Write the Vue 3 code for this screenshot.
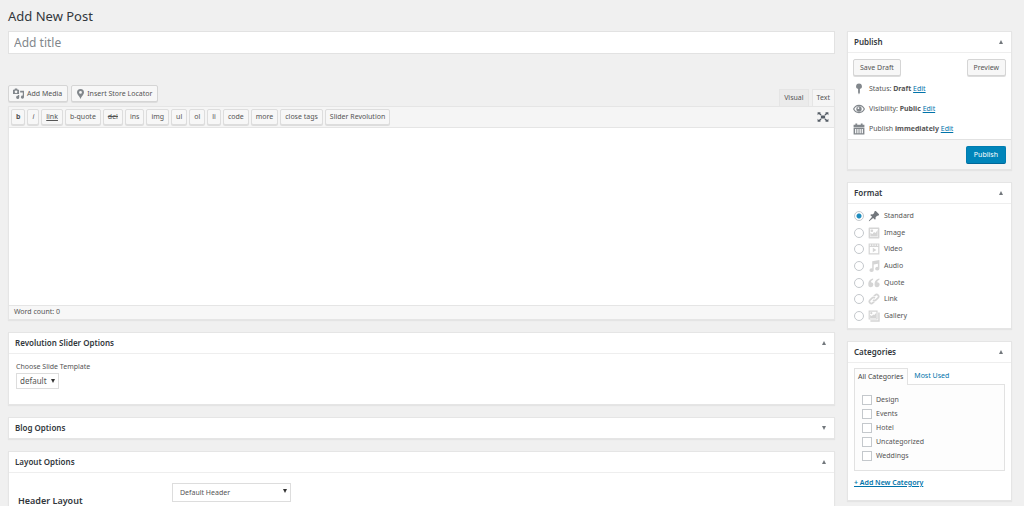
<script setup>
import { ref } from 'vue'

const title = ref('')
const content = ref('')
const format = ref('Standard')
const slide = ref('default')
const header = ref('Default Header')
const checked = ref([])

const tags = ['b', 'i', 'link', 'b-quote', 'del', 'ins', 'img', 'ul', 'ol', 'li', 'code', 'more', 'close tags', 'Slider Revolution']
const categories = ['Design', 'Events', 'Hotel', 'Uncategorized', 'Weddings']

const status = [
  { label: 'Status:', value: 'Draft', icon: 'M10 1a5 4.500 0 0 1 1.500 8.800V16L10 19 8.500 16V9.800A5 4.500 0 0 1 10 1z' },
  { label: 'Visibility:', value: 'Public', icon: 'M10 3C5 3 1.500 6.500 0 10c1.500 3.500 5 7 10 7s8.500-3.500 10-7C18.500 6.500 15 3 10 3zM10 5c3.800 0 6.300 2.200 7.800 5-1.500 2.800-4 5-7.800 5s-6.300-2.200-7.800-5C3.700 7.200 6.200 5 10 5zM10 5.500a4.500 4.500 0 1 0 0 9 4.500 4.500 0 0 0 0-9zM9 7a1.500 1.500 0 1 1 0 3 1.500 1.500 0 0 1 0-3z' },
  { label: 'Publish', value: 'immediately', icon: 'M1 3h3V1h3v2h6V1h3v2h3v4H1V3zM1 8h18v11H1V8zM3.500 10v7h2v-7h-2zM7.200 10v7h2v-7h-2zM10.900 10v7h2v-7h-2zM14.500 10v7h2v-7h-2z' },
]

const formats = [
  { name: 'Standard', icon: 'M10.400 3l1.100-1.100c.6-.6 1.400-.4 1.900.1l4.600 4.600c.5.500.7 1.300.1 1.900L17 9.600c-.7-.1-1.500-.1-2.100.2l-2.300 2.300c.4 1.500.2 3.100-.9 4.200L8.600 13.200 3.500 17.700c-.6.500-1.700 1.200-2 .9s.4-1.400.9-2L6.800 11.400 3.700 8.300c1.100-1.100 2.700-1.300 4.200-.9l2.300-2.300c.3-.6.3-1.400.2-2.100z' },
  { name: 'Image', icon: 'M2 1h16a1 1 0 0 1 1 1v16a1 1 0 0 1-1 1H2a1 1 0 0 1-1-1V2a1 1 0 0 1 1-1zM3.500 3.500v13h13v-13h-13zM6.500 4a2.200 2.200 0 1 1 0 4.400 2.200 2.200 0 0 1 0-4.400zM4 16V10l3.500 1.500L10 8.500l2.500 1.500L16 5v11H4z' },
  { name: 'Video', icon: 'M1 1h18v18H1V1zM3 2.500v2h2v-2H3zM7 2.500v2h2v-2H7zM11 2.500v2h2v-2h-2zM15 2.500v2h2v-2h-2zM3 6.500V17h14V6.500H3zM8 8l6 3.800-6 3.800V8z' },
  { name: 'Audio', icon: 'M7 2l12-2v14.500a3.500 3 0 1 1-2.500-2.900V6.200L9.500 7.500V17A3.500 3 0 1 1 7 14.100V2z' },
  { name: 'Quote', icon: 'M8.500 2.500v2.200C6.300 5.500 5 7 4.800 8.700a4.200 4.200 0 1 1-4.300 4C.2 7 3.500 3.300 8.500 2.500zM19 2.500v2.200c-2.200.8-3.500 2.300-3.700 4a4.200 4.200 0 1 1-4.300 4C10.700 7 14 3.300 19 2.500z' },
  { name: 'Link', icon: 'M17.700 2.300a4.800 4.800 0 0 0-6.600 0L8 5.300c1.300-.3 2.500 0 3.600.6l1.500-1.500a1.800 1.800 0 1 1 2.600 2.600l-3.400 3.400a1.800 1.800 0 0 1-2.700 0L7.500 12.500a4.800 4.800 0 0 0 6.800 0l3.400-3.500a4.800 4.800 0 0 0 0-6.700zM2.300 17.700a4.800 4.800 0 0 0 6.600 0l3.100-3c-1.300.3-2.500 0-3.600-.6l-1.500 1.500a1.800 1.800 0 1 1-2.600-2.600l3.400-3.400a1.800 1.800 0 0 1 2.700 0L12.500 7.500a4.800 4.800 0 0 0-6.800 0L2.300 11a4.800 4.800 0 0 0 0 6.700z' },
  { name: 'Gallery', icon: 'M1 1h15v15H1V1zM3 3v11h11V3H3zM5.500 3.500a1.800 1.800 0 1 1 0 3.600 1.800 1.800 0 0 1 0-3.600zM3.500 13.500V8.500l3 1.500 2-2.500 2 1L13.500 5v8.500h-10zM17 4h2.500v15.500H4V17h13V4z' },
]
</script>

<template>
  <div class="page">
    <h1>Add New Post</h1>
    <div class="columns">
      <main>
        <input v-model="title" class="title" type="text" placeholder="Add title" aria-label="Add title" />

        <div class="editor-tools">
          <button class="button media" type="button">
            <svg viewBox="0 0 20 20" aria-hidden="true"><path fill-rule="evenodd" d="M0 3h2.500l1-2h4l1 2H11v8H0V3zM5.500 4.500a2.500 2.500 0 1 0 0 5 2.500 2.500 0 0 0 0-5zM13 5h7v11.500a2.800 2.800 0 1 1-2.200-2.700V8H13V5zM9 12.500h2.300V17A2.800 2.800 0 1 1 9 14.300v-1.800z" /></svg>
            Add Media
          </button>
          <button class="button media" type="button">
            <svg class="pin" viewBox="0 0 14 20" aria-hidden="true"><path fill-rule="evenodd" d="M7 0a7 7 0 0 1 7 7C14 11.500 9 14 7 20 5 14 0 11.500 0 7A7 7 0 0 1 7 0zM7 4a2.800 2.800 0 1 0 0 5.600A2.800 2.800 0 0 0 7 4z" /></svg>
            Insert Store Locator
          </button>
          <div class="modes">
            <button type="button">Visual</button>
            <button class="active" type="button">Text</button>
          </div>
        </div>

        <section class="editor">
          <div class="toolbar">
            <button v-for="tag in tags" :key="tag" type="button" class="button tag" :class="'tag-' + tag.charAt(0) + tag.length">{{ tag }}</button>
            <button class="expand" type="button" aria-label="Fullscreen">
              <svg viewBox="0 0 20 20" aria-hidden="true"><path d="M6.500 7.500h7v5h-7zM1 2h5.500L5 3.500 7.500 6 6 7.500 3 5 1 7zM19 2h-5.500L15 3.500 12.500 6 14 7.500 17 5l2 2zM1 18h5.500L5 16.500 7.500 14 6 12.500 3 15l-2-2zM19 18h-5.500l1.500-1.500-2.500-2.500 1.500-1.500 3 2.500 2-2z" /></svg>
            </button>
          </div>
          <textarea v-model="content" aria-label="Content"></textarea>
          <div class="count">Word count: 0</div>
        </section>

        <section class="box">
          <h2>Revolution Slider Options<button type="button" class="toggle" aria-label="Toggle panel"></button></h2>
          <div class="slider-body">
            <label for="slide">Choose Slide Template</label>
            <span class="select">
              <select id="slide" v-model="slide"><option>default</option></select>
            </span>
          </div>
        </section>

        <section class="box closed">
          <h2>Blog Options<button type="button" class="toggle down" aria-label="Toggle panel"></button></h2>
        </section>

        <section class="box">
          <h2>Layout Options<button type="button" class="toggle" aria-label="Toggle panel"></button></h2>
          <div class="layout-body">
            <label for="header">Header Layout</label>
            <span class="select wide">
              <select id="header" v-model="header"><option>Default Header</option></select>
            </span>
          </div>
        </section>
      </main>

      <aside>
        <section class="box">
          <h2>Publish<button type="button" class="toggle" aria-label="Toggle panel"></button></h2>
          <div class="publish-body">
            <div class="drafts">
              <button class="button" type="button">Save Draft</button>
              <button class="button" type="button">Preview</button>
            </div>
            <p v-for="row in status" :key="row.label">
              <svg viewBox="0 0 20 20" aria-hidden="true"><path fill-rule="evenodd" :d="row.icon" /></svg>
              <span>{{ row.label }} <b>{{ row.value }}</b> <a href="#">Edit</a></span>
            </p>
          </div>
          <div class="publish-foot">
            <button class="primary" type="button">Publish</button>
          </div>
        </section>

        <section class="box">
          <h2>Format<button type="button" class="toggle" aria-label="Toggle panel"></button></h2>
          <div class="formats">
            <label v-for="f in formats" :key="f.name">
              <input v-model="format" type="radio" name="format" :value="f.name" />
              <svg viewBox="0 0 20 20" :class="{ dark: f.name === 'Standard' }" aria-hidden="true"><path fill-rule="evenodd" :d="f.icon" /></svg>
              {{ f.name }}
            </label>
          </div>
        </section>

        <section class="box">
          <h2>Categories<button type="button" class="toggle" aria-label="Toggle panel"></button></h2>
          <div class="cat-body">
            <div class="tabs">
              <button class="active" type="button">All Categories</button>
              <button type="button">Most Used</button>
            </div>
            <div class="cats">
              <label v-for="c in categories" :key="c">
                <input v-model="checked" type="checkbox" :value="c" />{{ c }}
              </label>
            </div>
            <a class="add" href="#">+ Add New Category</a>
          </div>
        </section>
      </aside>
    </div>
  </div>
</template>

<style>
html,
body {
  margin: 0;
  background: #f0f0f0;
}
</style>

<style scoped>
* {
  box-sizing: border-box;
}
.page {
  padding: 8px 12px 12px 8px;
  font: 7px/12px "Noto Sans", "Open Sans", sans-serif;
  color: #555;
}
button,
input,
select,
textarea {
  font: inherit;
  color: inherit;
  margin: 0;
}
button {
  padding: 0;
  border: 0;
  background: none;
  white-space: nowrap;
}
svg {
  fill: #82878c;
  flex: none;
}
a {
  color: #0073aa;
}
h1 {
  margin: 0 0 7px;
  font-size: 13px;
  line-height: 16px;
  font-weight: 400;
  color: #32373c;
}
.columns {
  display: flex;
  align-items: flex-start;
  gap: 12px;
}
main {
  flex: 1;
  min-width: 0;
}
aside {
  width: 165px;
  flex: none;
}
.title {
  display: block;
  width: 100%;
  height: 23px;
  padding: 0 5px;
  border: 1px solid #e2e2e2;
  background: #fff;
  font-size: 12px;
}
.title::placeholder {
  color: #82878c;
  opacity: 1;
}
.button {
  height: 17px;
  padding: 0 6px;
  border: 1px solid #d5d5d5;
  border-radius: 2px;
  background: #f7f7f7;
  box-shadow: 0 1px 0 #ddd;
}
.editor-tools {
  display: flex;
  align-items: flex-start;
  gap: 3px;
  margin-top: 31px;
}
.media {
  display: flex;
  align-items: center;
  gap: 3px;
  padding: 0 5px 0 4px;
}
.media svg {
  width: 11px;
  height: 11px;
}
.media .pin {
  width: 7px;
  height: 10px;
  margin-left: 1px;
}
.modes {
  display: flex;
  gap: 3px;
  margin: 4px 0 0 auto;
}
.modes button {
  height: 17px;
  padding: 0 4px;
  border: 1px solid #e5e5e5;
  border-bottom: 0;
  background: #ebebeb;
}
.modes .active {
  background: #f5f5f5;
}
.editor {
  border: 1px solid #e5e5e5;
  box-shadow: 0 1px 1px #e4e4e4;
}
.toolbar {
  display: flex;
  gap: 2px;
  padding: 2px 5px 2px 2px;
  background: #f5f5f5;
  border-bottom: 1px solid #e5e5e5;
}
.tag {
  height: 16px;
  padding: 0 4px;
  border-color: #ddd;
}
.tag-b1 {
  font-weight: 700;
}
.tag-i1 {
  font-style: italic;
}
.tag-l4 {
  text-decoration: underline;
}
.tag-d3 {
  text-decoration: line-through;
}
.expand {
  display: flex;
  align-items: center;
  margin-left: auto;
}
.expand svg {
  width: 12px;
  height: 12px;
  fill: #555d66;
}
textarea {
  display: block;
  width: 100%;
  height: 177px;
  border: 0;
  resize: none;
  background: #fff;
}
.count {
  height: 14px;
  padding: 0 5px;
  border-top: 1px solid #e5e5e5;
  background: #f7f7f7;
}
.box {
  border: 1px solid #e5e5e5;
  background: #fff;
  box-shadow: 0 1px 1px #e4e4e4;
  margin-bottom: 12px;
}
main .box {
  margin: 12px 0;
}
h2 {
  display: flex;
  align-items: center;
  justify-content: space-between;
  margin: 0;
  padding: 0 8px 0 6px;
  height: 21px;
  border-bottom: 1px solid #eee;
  font-size: 8px;
  font-weight: 600;
  color: #32373c;
}
.closed h2 {
  height: 20px;
  border-bottom: 0;
}
.toggle {
  border: solid transparent;
  border-width: 0 2px 4px;
  border-bottom-color: #72777c;
}
.toggle.down {
  border-width: 4px 2px 0;
  border-top-color: #72777c;
}
.select {
  position: relative;
  display: block;
}
.select::after {
  content: "";
  position: absolute;
  right: 4px;
  top: 6px;
  border: solid transparent;
  border-width: 4px 2px 0;
  border-top-color: #333;
  pointer-events: none;
}
select {
  appearance: none;
  display: block;
  width: 100%;
  height: 16px;
  padding: 0 3px;
  border: 1px solid #ddd;
  border-radius: 0;
  background: #fff;
  font-size: 8px;
}
.slider-body {
  padding: 7px 7px 15px;
}
.slider-body label {
  display: block;
}
.slider-body .select {
  width: 43px;
}
.layout-body {
  display: flex;
  align-items: flex-start;
  padding: 10px 9px;
}
.layout-body label {
  width: 154px;
  margin-top: 12px;
  font-size: 9px;
  font-weight: 600;
  color: #32373c;
}
.wide {
  width: 119px;
}
.wide select {
  height: 19px;
  padding: 0 7px;
  font-size: 7px;
}
.publish-body {
  padding: 6px 5px 0;
}
.drafts {
  display: flex;
  justify-content: space-between;
  margin-bottom: 3px;
}
.publish-body p {
  display: flex;
  align-items: center;
  gap: 4px;
  margin: 0;
  height: 20px;
}
.publish-body svg {
  width: 12px;
  height: 12px;
}
.publish-foot {
  display: flex;
  justify-content: flex-end;
  padding: 6px 5px 5px;
  border-top: 1px solid #e2e2e2;
  background: #f5f5f5;
}
.primary {
  height: 18px;
  padding: 0 7px;
  border: 1px solid #007cb0;
  border-bottom-color: #006799;
  border-radius: 2px;
  background: #0085ba;
  color: #fff;
}
.formats {
  display: grid;
  align-content: space-between;
  min-height: 124px;
  padding: 6px;
}
.formats label {
  display: flex;
  align-items: center;
  gap: 4px;
}
.formats svg {
  width: 12px;
  height: 12px;
  fill: #d5d5d5;
}
.formats svg.dark {
  fill: #72777c;
}
input[type="radio"],
input[type="checkbox"] {
  appearance: none;
  flex: none;
  width: 10px;
  height: 10px;
  border: 1px solid #c4c8cc;
  background: #fff;
}
input[type="radio"] {
  border-radius: 50%;
}
input[type="radio"]:checked {
  background: radial-gradient(circle, #1e8cbe 2px, #fff 3px);
}
.cat-body {
  padding: 5px 6px 11px;
}
.tabs {
  display: flex;
}
.tabs button {
  height: 16px;
  padding: 0 6px;
  color: #0073aa;
}
.tabs .active {
  z-index: 1;
  margin-bottom: -1px;
  height: 17px;
  padding: 0 4px 0 3px;
  border: 1px solid #e2e2e2;
  border-bottom: 0;
  background: #fdfdfd;
  color: #444;
}
.cats {
  padding: 8px 7px 7px;
  border: 1px solid #e2e2e2;
  background: #fdfdfd;
}
.cats label {
  display: flex;
  align-items: center;
  gap: 4px;
  height: 14px;
}
.add {
  display: block;
  margin-top: 6px;
  font-weight: 600;
}
</style>
